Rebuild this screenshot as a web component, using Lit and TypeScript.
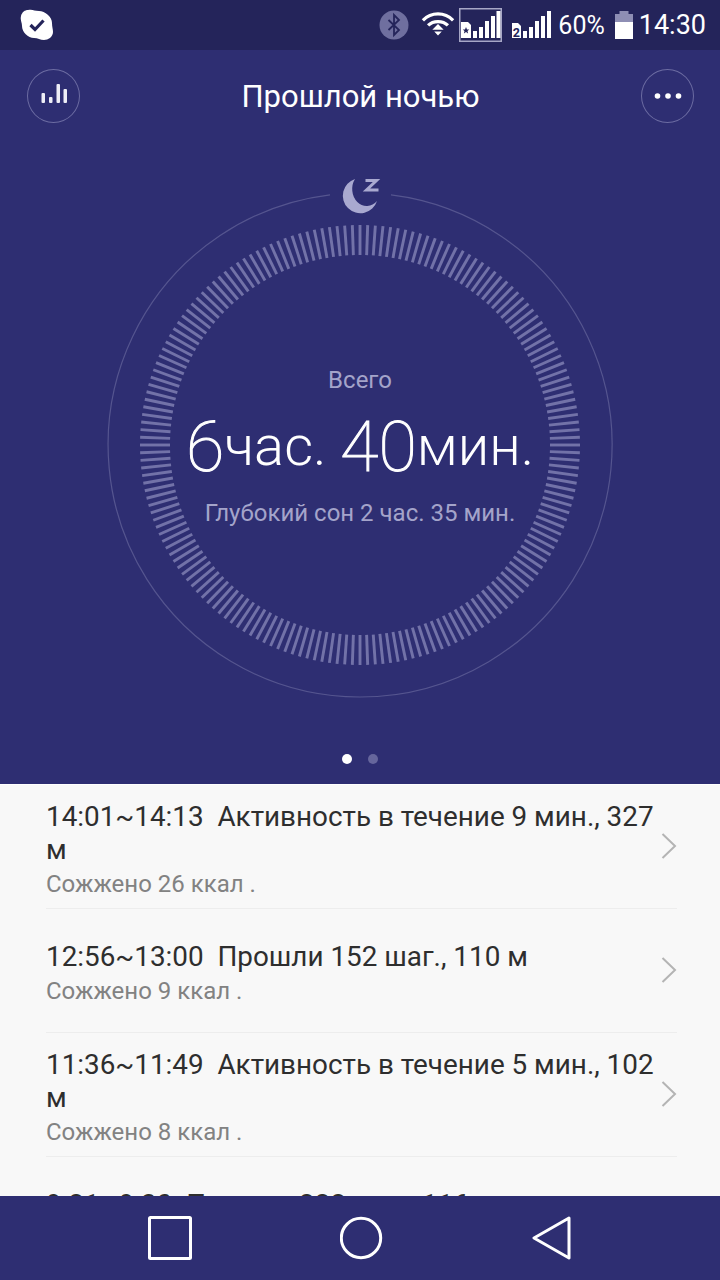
import { LitElement, html, css, svg } from 'lit';
import { customElement } from 'lit/decorators.js';

interface ActivityRow {
  title: string;
  burned: string;
}

const ROWS: Array<ActivityRow> = [
  { title: '14:01~14:13  Активность в течение 9 мин., 327 м', burned: 'Сожжено 26 ккал .' },
  { title: '12:56~13:00  Прошли 152 шаг., 110 м', burned: 'Сожжено 9 ккал .' },
  { title: '11:36~11:49  Активность в течение 5 мин., 102 м', burned: 'Сожжено 8 ккал .' },
  { title: '9:21~9:30  Прошли 222 шаг., 116 м', burned: 'Сожжено 7 ккал .' },
];

const TICK_COUNT = 180;

// ring is drawn in a 540 box, centre 270,270
function ticks() {
  const out = [];
  for (let i = 0; i < TICK_COUNT; i++) {
    const a = (i / TICK_COUNT) * Math.PI * 2;
    const c = Math.cos(a);
    const s = Math.sin(a);
    out.push(
      svg`<line x1=${270 + 190 * c} y1=${270 + 190 * s} x2=${270 + 220 * c} y2=${270 + 220 * s}></line>`
    );
  }
  return out;
}

// five signal bars, x offsets and tops come from the status bar icons
function signalBars(xs: Array<number>, tops: Array<number>, bottom: number) {
  return xs.map(
    (x, i) => svg`<rect x=${x} y=${tops[i]} width="4" height=${bottom - tops[i]} fill="#fff"></rect>`
  );
}

@customElement('app-root')
export class AppRoot extends LitElement {
  static override styles = css`
    :host {
      display: block;
      width: 720px;
      height: 1280px;
      font-family: Roboto, 'Noto Sans', sans-serif;
    }
    .page {
      display: flex;
      flex-direction: column;
      height: 1280px;
      overflow: hidden;
      background: #f8f8f8;
    }

    .status {
      flex: none;
      height: 50px;
      display: flex;
      align-items: center;
      padding: 0 14px 0 20px;
      box-sizing: border-box;
      background: #24245a;
      color: #fff;
    }
    .status svg {
      display: block;
      flex: none;
    }
    .status--spacer {
      flex: 1;
    }
    .status--percent {
      font-size: 25px;
      margin: 0 10px 0 6px;
    }
    .status--time {
      font-size: 27px;
      margin-left: 6px;
    }
    .status--wifi {
      margin-left: 12px;
    }
    .sim-box {
      margin: 0 8px 0 4px;
    }

    .hero {
      flex: none;
      height: 734px;
      box-sizing: border-box;
      display: flex;
      flex-direction: column;
      align-items: center;
      background: #2e2e72;
      color: #fff;
    }
    .topbar {
      width: 100%;
      height: 125px;
      box-sizing: border-box;
      padding: 19px 26px 0 27px;
      display: flex;
      justify-content: space-between;
      align-items: flex-start;
    }
    .round-btn {
      width: 53px;
      height: 54px;
      box-sizing: border-box;
      border: 1.5px solid #6c6ca2;
      border-radius: 50%;
      display: flex;
      align-items: center;
      justify-content: center;
    }
    .topbar--title {
      font-size: 31px;
      line-height: 54px;
      margin-top: 1px;
    }

    .ring {
      width: 540px;
      height: 540px;
      display: grid;
      justify-items: center;
      align-items: center;
    }
    .ring > * {
      grid-area: 1 / 1;
    }
    .ring--ticks line {
      stroke: #7272a8;
      stroke-width: 2.9;
    }
    .ring--text {
      display: flex;
      flex-direction: column;
      align-items: center;
      margin-top: 2px;
    }
    .ring--label {
      font-size: 24px;
      line-height: 30px;
      color: #a4a4ca;
    }
    .ring--value {
      font-size: 56px;
      font-weight: 300;
      line-height: 84px;
      margin: 9px 0 10px;
      white-space: pre;
    }
    .ring--digit {
      font-size: 70px;
      font-weight: 100;
      line-height: 0;
      vertical-align: -6px;
      -webkit-text-stroke: 1px #fff;
    }

    .pager {
      display: flex;
      gap: 16px;
      margin-top: 39px;
    }
    .pager--dot {
      width: 10px;
      height: 10px;
      border-radius: 50%;
      background: #66669c;
    }
    .pager--dot.active {
      background: #fff;
    }

    .list {
      flex: 1;
      min-height: 0;
      overflow: hidden;
      border-top: 1px solid #fff;
    }
    .row {
      height: 123px;
      margin: 0 43px 0 46px;
      display: flex;
      align-items: center;
      border-bottom: 1px solid #ededed;
    }
    .row--body {
      flex: 1;
      min-width: 0;
      padding: 8px 5px 0 0;
    }
    .row--title {
      font-size: 27.85px;
      line-height: 33px;
      color: #2e2e2e;
      white-space: pre-wrap;
    }
    .row--burned {
      font-size: 24px;
      line-height: 36px;
      color: #828282;
    }
    .row--chevron {
      flex: none;
      display: block;
      margin-bottom: 2px;
    }

    .nav {
      flex: none;
      height: 84px;
      background: #2e2e72;
      display: flex;
      align-items: center;
      justify-content: center;
      gap: 148px;
    }
    .nav svg {
      display: block;
    }
  `;

  override render() {
    return html`
      <div class="page">
        ${this.renderStatus()}
        <div class="hero">
          <div class="topbar">
            <div class="round-btn">
              <svg width="28" height="24" viewBox="0 0 28 24" fill="#eeeef6">
                <rect x="1.5" y="9" width="3.5" height="10" rx="1"></rect>
                <rect x="9" y="13" width="3.5" height="6" rx="1"></rect>
                <rect x="16.5" y="0" width="3.5" height="19" rx="1"></rect>
                <rect x="23.5" y="5" width="3.5" height="14" rx="1"></rect>
              </svg>
            </div>
            <div class="topbar--title">Прошлой ночью</div>
            <div class="round-btn">
              <svg width="28" height="8" viewBox="0 0 28 8" fill="#fff">
                <circle cx="3.5" cy="4" r="2.8"></circle>
                <circle cx="14" cy="4" r="2.8"></circle>
                <circle cx="24.5" cy="4" r="2.8"></circle>
              </svg>
            </div>
          </div>
          <div class="ring">
            <svg class="ring--ticks" width="540" height="540" viewBox="0 0 540 540">
              <path d="M301 19.9 A252 252 0 1 1 240 19.8" fill="none" stroke="#55558f" stroke-width="1.2"></path>
              ${ticks()}
              <path d="M265 4 A17.5 17.5 0 1 0 287 26 A14.5 17 0 0 1 265 4 Z" fill="#a9a9d0"></path>
              <path d="M275.5 5.5 h11 l-10 9.5 h12" fill="none" stroke="#a9a9d0" stroke-width="3"></path>
            </svg>
            <div class="ring--text">
              <div class="ring--label">Всего</div>
              <div class="ring--value"><span class="ring--digit">6</span>час. <span class="ring--digit">40</span>мин.</div>
              <div class="ring--label">Глубокий сон 2 час. 35 мин.</div>
            </div>
          </div>
          <div class="pager">
            <div class="pager--dot active"></div>
            <div class="pager--dot"></div>
          </div>
        </div>
        <div class="list">
          ${ROWS.map(
            (row) => html`
              <div class="row">
                <div class="row--body">
                  <div class="row--title">${row.title}</div>
                  <div class="row--burned">${row.burned}</div>
                </div>
                <svg class="row--chevron" width="16" height="26" viewBox="0 0 16 26" fill="none" stroke="#b4b4b4" stroke-width="2">
                  <path d="M1.5 1 L14 13 L1.5 25"></path>
                </svg>
              </div>
            `
          )}
        </div>
        <div class="nav">
          <svg width="44" height="44" viewBox="0 0 44 44" fill="none" stroke="#fff" stroke-width="3">
            <rect x="1.5" y="1.5" width="41" height="41" rx="1"></rect>
          </svg>
          <svg width="44" height="44" viewBox="0 0 44 44" fill="none" stroke="#fff" stroke-width="3">
            <circle cx="21" cy="22" r="19.7"></circle>
          </svg>
          <svg width="40" height="44" viewBox="0 0 40 44" fill="none" stroke="#fff" stroke-width="3" stroke-linejoin="round">
            <path d="M37 2 L2 22 L37 42 Z"></path>
          </svg>
        </div>
      </div>
    `;
  }

  private renderStatus() {
    return html`
      <div class="status">
        <svg width="34" height="32" viewBox="0 0 34 32">
          <path
            d="M8 1 C13 0 14 2 19 2 C25 2 32 8 32 14 C32 18 33 20 33 23 C33 28 28 31 24 31 C20 31 18 29 14 29 C8 29 2 23 2 17 C2 13 0 11 1 7 C2 3 5 1 8 1 Z"
            fill="#fff"
          ></path>
          <path d="M10.5 16 L15 20.5 L23.5 11.5" fill="none" stroke="#24245a" stroke-width="3.2"></path>
        </svg>
        <div class="status--spacer"></div>
        <svg width="30" height="30" viewBox="0 0 30 30">
          <circle cx="15" cy="15" r="14.5" fill="#6f6f9f"></circle>
          <path d="M9.5 10 L20 20 L15 25 V5 L20 10 L9.5 20" fill="none" stroke="#24245a" stroke-width="1.8"></path>
        </svg>
        <svg class="status--wifi" width="34" height="28" viewBox="0 0 36 28" fill="none" stroke="#fff" stroke-width="3.4">
          <path d="M2 9 C11 0 25 0 34 9"></path>
          <path d="M7.5 14.5 C13 9 23 9 28.5 14.5"></path>
          <path d="M18 13 L24 19 L12 19 Z" fill="#fff" stroke="none"></path>
          <path d="M14 21 h8 l-4 4 z M18 25 v3" fill="#fff" stroke="none"></path>
        </svg>
        <svg class="sim-box" width="43" height="34" viewBox="0 0 43 34">
          <rect x="0.75" y="0.75" width="41.5" height="32.5" fill="none" stroke="#a7a7c6" stroke-width="1.5"></rect>
          <path d="M2 14 h7 l3 3 v13 h-10 z" fill="#fff"></path>
          <path d="M7 19 l1 2.4 2.3 .1 -1.8 1.5 .6 2.4 -2.1 -1.3 -2.1 1.3 .6 -2.4 -1.8 -1.5 2.3 -.1 z" fill="#24245a"></path>
          ${signalBars([14, 20, 26, 32, 37.5], [23, 19, 13, 8, 3], 30)}
        </svg>
        <svg width="42" height="32" viewBox="0 0 42 32">
          <path d="M2 14 h6 l3 3 v12 h-9 z" fill="#fff"></path>
          <text x="2.8" y="27.5" font-family="Roboto" font-weight="700" font-size="12.5" fill="#24245a">2</text>
          ${signalBars([13, 19, 25, 31, 37], [22, 18, 12, 7, 2], 29)}
        </svg>
        <span class="status--percent">60%</span>
        <svg width="18" height="28" viewBox="0 0 18 28">
          <rect x="4.5" y="0" width="9" height="3" fill="#8e8eb4"></rect>
          <rect x="0" y="3" width="18" height="8" fill="#8e8eb4"></rect>
          <rect x="0" y="11" width="18" height="17" fill="#fff"></rect>
        </svg>
        <span class="status--time">14:30</span>
      </div>
    `;
  }
}

declare global {
  interface HTMLElementTagNameMap {
    'app-root': AppRoot;
  }
}
